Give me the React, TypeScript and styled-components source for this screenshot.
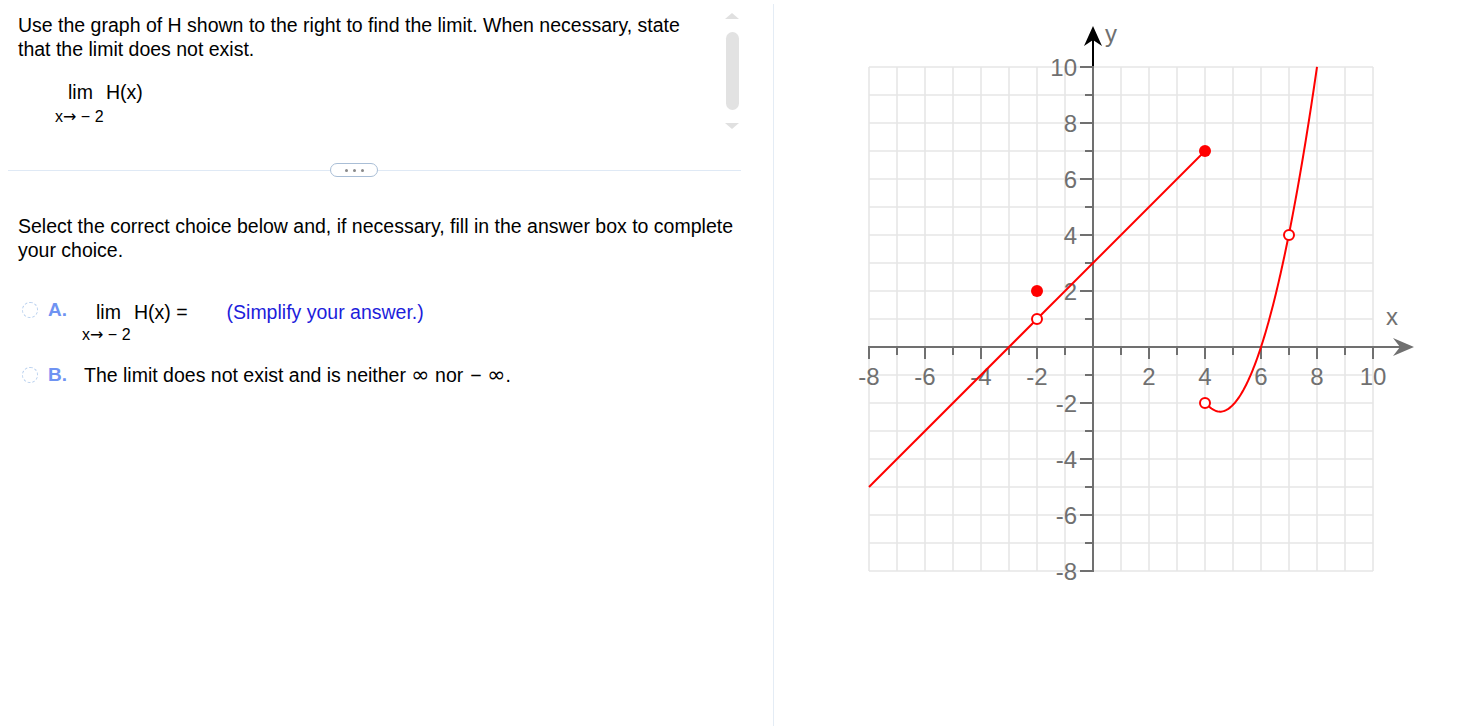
import React from 'react';
import styled, { createGlobalStyle } from 'styled-components';

const GlobalStyle = createGlobalStyle`
  html, body {
    margin: 0;
    padding: 0;
    background: #fff;
  }
  body {
    font-family: 'Liberation Sans', Arial, sans-serif;
    color: #000;
  }
`;

const Page = styled.div`
  display: flex;
  align-items: flex-start;
  width: 1462px;
  height: 726px;
  overflow: hidden;
`;

const LeftPane = styled.div`
  box-sizing: border-box;
  flex-shrink: 0;
  width: 774px;
  height: 722px;
  margin-top: 4px;
  border-right: 1px solid #e4ecf5;
`;

const QuestionArea = styled.div`
  display: flex;
  height: 159px;
  box-sizing: border-box;
  padding: 9px 0 0 18px;
`;

const QuestionBody = styled.div`
  flex: 1;
  font-size: 19.5px;
  line-height: 24px;
`;

const Scrollbar = styled.div`
  display: flex;
  flex-direction: column;
  align-items: center;
  width: 14px;
  margin-right: 34px;
`;

const ArrowUp = styled.div`
  width: 0;
  height: 0;
  border-left: 7px solid transparent;
  border-right: 7px solid transparent;
  border-bottom: 6px solid #e0e0e0;
`;

const ArrowDown = styled(ArrowUp)`
  border-bottom: none;
  border-top: 6px solid #e0e0e0;
  margin-top: 13px;
`;

const Thumb = styled.div`
  width: 13px;
  height: 78px;
  margin-top: 13px;
  border-radius: 7px;
  background: #e2e2e2;
`;

const Divider = styled.div`
  display: flex;
  align-items: center;
  width: 733px;
  height: 14px;
  margin-left: 8px;
`;

const DividerLine = styled.div<{ $width?: number }>`
  height: 1px;
  background: #dfe9f5;
  ${({ $width }) => ($width ? `width: ${$width}px;` : 'flex: 1;')}
`;

const Pill = styled.div`
  box-sizing: border-box;
  display: flex;
  align-items: center;
  justify-content: center;
  gap: 5px;
  width: 48px;
  height: 14px;
  border: 1px solid #a9bed6;
  border-radius: 7px;
`;

const Dot = styled.span`
  width: 3px;
  height: 3px;
  border-radius: 50%;
  background: #8a8a8a;
`;

const Instruction = styled.div`
  margin-top: 37px;
  padding-left: 18px;
  font-size: 19.5px;
  line-height: 24px;
`;

const Choices = styled.div`
  display: flex;
  flex-direction: column;
  gap: 19px;
  margin-top: 38px;
  padding-left: 22px;
`;

const ChoiceRow = styled.div`
  display: flex;
  align-items: flex-start;
`;

const Radio = styled.span`
  box-sizing: border-box;
  width: 16px;
  height: 16px;
  margin-top: 2px;
  border: 1px dashed #b9d0ee;
  border-radius: 50%;
`;

const ChoiceLetter = styled.span`
  width: 36px;
  margin-left: 10px;
  font-size: 19px;
  line-height: 20px;
  font-weight: bold;
  color: #6f93f2;
`;

const ChoiceText = styled.span`
  font-size: 19.5px;
  line-height: 20px;
`;

const Infinity = styled.span`
  font-family: 'DejaVu Sans', sans-serif;
  font-size: 22px;
  line-height: 20px;
`;

const LimBlock = styled.div<{ $indent: number; $top?: number }>`
  display: flex;
  flex-direction: column;
  align-items: flex-start;
  margin-left: ${({ $indent }) => $indent}px;
  margin-top: ${({ $top }) => $top ?? 0}px;
`;

const LimRow = styled.div`
  display: flex;
  align-items: baseline;
  font-size: 19.5px;
  line-height: 24px;
`;

const LimWord = styled.span`
  margin-right: 13px;
`;

const LimSub = styled.div<{ $lh: number; $shift: number }>`
  margin-left: -${({ $shift }) => $shift}px;
  font-size: 16px;
  line-height: ${({ $lh }) => $lh}px;
  white-space: pre;
`;

const Arrow = styled.span`
  font-family: 'DejaVu Sans', sans-serif;
  font-size: 16px;
`;

const Hint = styled.span`
  margin-left: 39px;
  color: #1d1ddb;
`;

const RightPane = styled.div`
  flex: 1;
  padding-left: 66px;
`;

const Graph = styled.svg`
  display: block;
  font-family: 'Liberation Sans', Arial, sans-serif;
`;

// graph scale: 28px per unit, origin at (253, 347) in svg coords
const U = 28;
const OX = 253;
const OY = 347;
const px = (u: number) => OX + U * u;
const py = (v: number) => OY - U * v;
const range = (a: number, b: number) => Array.from({ length: b - a + 1 }, (_, i) => a + i);

const RED = '#ff0000';
const AXIS = '#707070';

const curve = (() => {
  const pts: string[] = [];
  for (let i = 0; i <= 120; i++) {
    const x = 4 + (4 * i) / 120;
    const y = -2.31 + 1.108 * Math.pow(Math.abs(x - 4.54), 1.94);
    pts.push(`${px(x).toFixed(2)},${py(y).toFixed(2)}`);
  }
  return pts.join(' ');
})();

const CoordGraph: React.FC = () => {
  const units = range(-8, 10);
  return (
    <Graph width={600} height={600} viewBox='0 0 600 600'>
      {units.map((i) => (
        <line key={`gv${i}`} x1={px(i)} y1={py(10)} x2={px(i)} y2={py(-8)} stroke='#e6e6e6' strokeWidth={1.6} />
      ))}
      {units.map((j) => (
        <line key={`gh${j}`} x1={px(-8)} y1={py(j)} x2={px(10)} y2={py(j)} stroke='#e6e6e6' strokeWidth={1.6} />
      ))}

      <line x1={px(-8)} y1={OY} x2={560} y2={OY} stroke={AXIS} strokeWidth={2} />
      <polygon points={`574,${OY} 553,${OY - 9} 560,${OY} 553,${OY + 9}`} fill={AXIS} />
      <line x1={OX} y1={py(-8)} x2={OX} y2={py(10)} stroke={AXIS} strokeWidth={2} />
      <line x1={OX} y1={py(10)} x2={OX} y2={40} stroke='#000' strokeWidth={2} />
      <polygon points={`${OX},26 ${OX - 9},46 ${OX},40 ${OX + 9},46`} fill='#000' />

      {units.filter((i) => i !== 0).map((i) => (
        <line key={`tx${i}`} x1={px(i)} y1={OY - 1} x2={px(i)} y2={OY + (i % 2 === 0 ? 12 : 8)} stroke={AXIS} strokeWidth={2} />
      ))}
      {units.filter((j) => j !== 0).map((j) => (
        <line key={`ty${j}`} x1={OX + 1} y1={py(j)} x2={OX - (j % 2 === 0 ? 13 : 8)} y2={py(j)} stroke={AXIS} strokeWidth={2} />
      ))}

      {units.filter((i) => i !== 0 && i % 2 === 0).map((i) => (
        <text key={`lx${i}`} x={px(i)} y={385} fontSize={24} fill={AXIS} textAnchor='middle'>
          {i}
        </text>
      ))}
      {units.filter((j) => j !== 0 && j % 2 === 0).map((j) => (
        <text key={`ly${j}`} x={237} y={py(j) + 8.5} fontSize={24} fill={AXIS} textAnchor='end'>
          {j}
        </text>
      ))}
      <text x={265} y={42} fontSize={24} fill={AXIS}>y</text>
      <text x={546} y={325} fontSize={24} fill={AXIS}>x</text>

      <line x1={px(-8)} y1={py(-5)} x2={px(4)} y2={py(7)} stroke={RED} strokeWidth={2} />
      <polyline points={curve} fill='none' stroke={RED} strokeWidth={2} />

      <circle cx={px(-2)} cy={py(2)} r={6} fill={RED} />
      <circle cx={px(4)} cy={py(7)} r={6} fill={RED} />
      <circle cx={px(-2)} cy={py(1)} r={5} fill='#fff' stroke={RED} strokeWidth={2} />
      <circle cx={px(4)} cy={py(-2)} r={5} fill='#fff' stroke={RED} strokeWidth={2} />
      <circle cx={px(7)} cy={py(4)} r={5} fill='#fff' stroke={RED} strokeWidth={2} />
    </Graph>
  );
};

const LimSubText: React.FC<{ lh: number; shift: number }> = ({ lh, shift }) => (
  <LimSub $lh={lh} $shift={shift}>
    x<Arrow>{'\u2192'}</Arrow>{' \u2212 2'}
  </LimSub>
);

export default function App() {
  return (
    <>
      <GlobalStyle />
      <Page>
        <LeftPane>
          <QuestionArea>
            <QuestionBody>
              Use the graph of H shown to the right to find the limit. When necessary, state
              <br />
              that the limit does not exist.
              <LimBlock $indent={50} $top={19}>
                <LimRow>
                  <LimWord>lim</LimWord>
                  <span>H(x)</span>
                </LimRow>
                <LimSubText lh={26} shift={13} />
              </LimBlock>
            </QuestionBody>
            <Scrollbar>
              <ArrowUp />
              <Thumb />
              <ArrowDown />
            </Scrollbar>
          </QuestionArea>

          <Divider>
            <DividerLine $width={322} />
            <Pill>
              <Dot />
              <Dot />
              <Dot />
            </Pill>
            <DividerLine />
          </Divider>

          <Instruction>
            Select the correct choice below and, if necessary, fill in the answer box to complete
            <br />
            your choice.
          </Instruction>

          <Choices>
            <ChoiceRow>
              <Radio />
              <ChoiceLetter>A.</ChoiceLetter>
              <LimBlock $indent={12} $top={0}>
                <LimRow>
                  <LimWord>lim</LimWord>
                  <span>H(x) =</span>
                  <Hint>(Simplify your answer.)</Hint>
                </LimRow>
                <LimSubText lh={22} shift={14} />
              </LimBlock>
            </ChoiceRow>
            <ChoiceRow>
              <Radio />
              <ChoiceLetter>B.</ChoiceLetter>
              <ChoiceText>
                The limit does not exist and is neither <Infinity>&#8734;</Infinity> nor &#8202;&#8722; <Infinity>&#8734;</Infinity>.
              </ChoiceText>
            </ChoiceRow>
          </Choices>
        </LeftPane>
        <RightPane>
          <CoordGraph />
        </RightPane>
      </Page>
    </>
  );
}
